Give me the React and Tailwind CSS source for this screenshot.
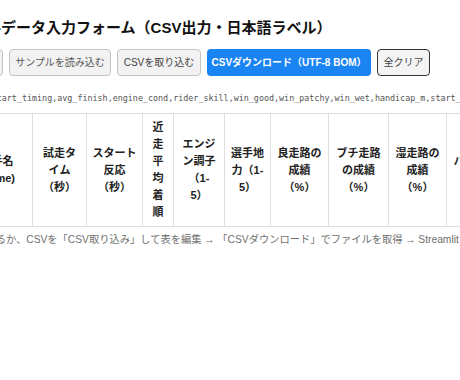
const headers = [
    { w: "w-[71px]", lines: ["選手名", "(name)"] },
    { w: "w-[54px]", lines: ["試走タ", "イム", "（秒）"] },
    { w: "w-[56px]", lines: ["スタート", "反応", "（秒）"] },
    { w: "w-[31px]", lines: ["近", "走", "平", "均", "着", "順"] },
    { w: "w-[51px]", lines: ["エンジ", "ン調子", "（1-", "5）"] },
    { w: "w-[46px]", lines: ["選手地", "力（1-", "5）"] },
    { w: "w-[58px]", lines: ["良走路の", "成績", "（%）"] },
    { w: "w-[60px]", lines: ["ブチ走路", "の成績", "（%）"] },
    { w: "w-[58px]", lines: ["湿走路の", "成績", "（%）"] },
    { w: "w-[69px]", lines: ["ハンデ距離", "（m）"] },
    { w: "w-[60px]", lines: ["スタート", "順"] },
];

const csvHeader =
    "name,trial_time,start_timing,avg_finish,engine_cond,rider_skill,win_good,win_patchy,win_wet,handicap_m,start_no";

const App = () => {
    return (
        <div className="w-[460px] h-[380px] overflow-hidden bg-white text-[#111] font-['Liberation_Sans','Noto_Sans_CJK_JP',sans-serif]">
            <div className="-ml-[39px] w-[700px]">
                {/* Title */}
                <h1 className="ml-[10px] pt-[18px] text-[15px] leading-[20px] font-bold whitespace-nowrap">
                    選手データ入力フォーム（CSV出力・日本語ラベル）
                </h1>

                {/* Toolbar */}
                <div className="mt-[11px] ml-[2px] flex items-center gap-[6px] text-[10px] whitespace-nowrap">
                    <button className="w-[40px] h-[27px] rounded-[4px] border border-[#c4c4c4] bg-[#f2f2f2] text-[#555]">
                        追加
                    </button>
                    <button className="w-[102px] h-[27px] rounded-[4px] border border-[#c4c4c4] bg-[#f2f2f2] text-[#555]">
                        サンプルを読み込む
                    </button>
                    <button className="w-[84px] h-[27px] rounded-[4px] border border-[#c4c4c4] bg-[#f2f2f2] text-[#444]">
                        CSVを取り込む
                    </button>
                    <button className="w-[164px] h-[27px] rounded-[4px] bg-[#1a84f2] text-white font-bold">
                        CSVダウンロード（UTF-8 BOM）
                    </button>
                    <button className="w-[53px] h-[27px] rounded-[4px] border-[1.5px] border-[#333] bg-[#f4f4f4] text-[#444]">
                        全クリア
                    </button>
                </div>

                {/* CSV header preview */}
                <div className="mt-[16px] -ml-[50px] text-[8.4px] leading-[12px] text-[#555] whitespace-nowrap font-['DejaVu_Sans_Mono',monospace]">
                    {csvHeader}
                </div>

                {/* Table */}
                <table className="mt-[9px] table-fixed border-collapse">
                    <thead>
                        <tr>
                            {headers.map((h, i) => (
                                <th
                                    key={i}
                                    className={`${h.w} h-[112px] border border-[#dedede] px-[5px] py-[5px] text-center align-middle text-[11px] leading-[17px] font-bold text-[#222]`}
                                >
                                    {h.lines.map((l, j) => (
                                        <div key={j} className="whitespace-nowrap">
                                            {l}
                                        </div>
                                    ))}
                                </th>
                            ))}
                        </tr>
                    </thead>
                </table>

                {/* Help text */}
                <p className="mt-[6px] ml-[4px] text-[10.25px] leading-[14px] text-[#707070] whitespace-nowrap">
                    入力するか、CSVを「CSV取り込み」して表を編集 → 「CSVダウンロード」でファイルを取得 → Streamlitアプリで読み込み
                </p>
            </div>
        </div>
    );
};

export default App;
